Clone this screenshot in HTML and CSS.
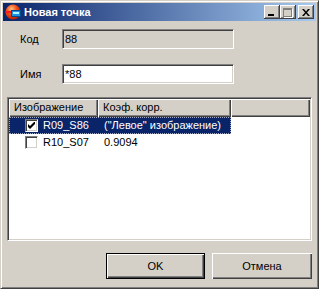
FILE: index.html
```html
<!DOCTYPE html>
<html lang="ru">
<head>
    <meta charset="UTF-8">
    <title>Новая точка</title>
    <link rel="stylesheet" href="styles.css">
</head>
<body>
    <div class="window">
        <div class="titlebar">
            <svg class="app-icon" width="16" height="16" viewBox="0 0 16 16">
                <defs>
                    <radialGradient id="ball" cx="0.4" cy="0.3" r="0.75">
                        <stop offset="0" stop-color="#ffc080"/>
                        <stop offset="0.45" stop-color="#f05018"/>
                        <stop offset="1" stop-color="#b01800"/>
                    </radialGradient>
                </defs>
                <circle cx="8" cy="8" r="7.5" fill="url(#ball)"/>
                <rect x="0.5" y="7" width="8" height="2" fill="#ff1a1a"/>
                <rect x="6.5" y="6.5" width="9" height="6" fill="#1e90e0" stroke="#004a90" stroke-width="1"/>
                <rect x="8" y="8" width="6" height="2" fill="#b0f4ff"/>
            </svg>
            <span class="title">Новая точка</span>
            <div class="controls">
                <div class="ctl ctl-min"><span></span></div>
                <div class="ctl ctl-max disabled"><span></span></div>
                <div class="ctl ctl-close">
                    <svg width="8" height="7" viewBox="0 0 8 7">
                        <path d="M0 0h2l2 2.5 2-2.5h2L5 3.5 8 7H6L4 4.5 2 7H0l3-3.5z" fill="#000"/>
                    </svg>
                </div>
            </div>
        </div>

        <div class="content">
            <div class="form-group first">
                <label for="code">Код</label>
                <input type="text" id="code" class="field disabled" value="88" readonly>
            </div>
            <div class="form-group">
                <label for="name">Имя</label>
                <input type="text" id="name" class="field" value="*88">
            </div>

            <div class="listview">
                <div class="lv-header">
                    <div class="hcell c1">Изображение</div>
                    <div class="hcell c2">Коэф. корр.</div>
                    <div class="hcell c3"></div>
                </div>
                <div class="lv-row selected">
                    <div class="cell c1"><span class="check checked">
                        <svg width="7" height="7" viewBox="0 0 7 7"><path d="M0 2v3l2 2 5-5V-1L2 4z" fill="#000"/></svg>
                    </span>R09_S86</div>
                    <div class="cell c2">("Левое" изображение)</div>
                </div>
                <div class="lv-row">
                    <div class="cell c1"><span class="check"></span>R10_S07</div>
                    <div class="cell c2">0.9094</div>
                </div>
            </div>

            <div class="buttons">
                <button class="btn default">OK</button>
                <button class="btn cancel">Отмена</button>
            </div>
        </div>
    </div>
</body>
</html>
```

FILE: styles.css
```css
body {
    margin: 0;
    font-family: "Liberation Sans", Arial, sans-serif;
    font-size: 11px;
    color: #000;
}
.window {
    width: 319px;
    height: 289px;
    box-sizing: border-box;
    background-color: #d4d0c8;
    border: 1px solid;
    border-color: #d4d0c8 #404040 #404040 #d4d0c8;
    box-shadow: inset 1px 1px #fff, inset -1px -1px #808080;
    padding: 2px;
}
.titlebar {
    height: 18px;
    display: flex;
    align-items: center;
    padding: 0 2px;
    background: linear-gradient(to right, #0a246a, #a6caf0);
}
.app-icon {
    margin-right: 3px;
}
.title {
    color: #fff;
    font-weight: bold;
    font-size: 11px;
}
.controls {
    margin-left: auto;
    display: flex;
}
.ctl {
    width: 16px;
    height: 14px;
    box-sizing: border-box;
    background-color: #d4d0c8;
    box-shadow: inset -1px -1px #404040, inset 1px 1px #fff, inset -2px -2px #808080;
    display: flex;
    align-items: center;
    justify-content: center;
}
.ctl-close {
    margin-left: 2px;
}
.ctl-min span {
    width: 6px;
    height: 2px;
    background: #000;
    margin-top: 6px;
    margin-left: -2px;
}
.ctl-max span {
    width: 9px;
    height: 9px;
    box-sizing: border-box;
    border: 1px solid #808080;
    border-top-width: 2px;
    margin-left: -1px;
    box-shadow: 1px 1px #fff;
}
.ctl-close svg {
    margin-left: -1px;
}
.content {
    padding: 0 4px;
}
.form-group {
    display: flex;
    align-items: center;
    padding-left: 13px;
    margin-top: 15px;
}
.form-group.first {
    margin-top: 8px;
}
label {
    width: 42px;
}
.field {
    width: 172px;
    height: 20px;
    box-sizing: border-box;
    margin: 0;
    padding: 0 2px;
    font-family: "Liberation Sans", Arial, sans-serif;
    font-size: 11px;
    color: #000;
    background-color: #fff;
    border: 1px solid;
    border-color: #808080 #fff #fff #808080;
    box-shadow: inset 1px 1px #404040, inset -1px -1px #d4d0c8;
    outline: none;
}
.field.disabled {
    background-color: #d4d0c8;
}
.listview {
    margin-top: 13px;
    height: 144px;
    box-sizing: border-box;
    background-color: #fff;
    border: 1px solid;
    border-color: #808080 #fff #fff #808080;
    box-shadow: inset 1px 1px #404040, inset -1px -1px #d4d0c8;
    padding: 1px;
}
.lv-header {
    display: flex;
    height: 18px;
}
.hcell {
    box-sizing: border-box;
    height: 18px;
    line-height: 17px;
    padding-left: 5px;
    background-color: #d4d0c8;
    box-shadow: inset 1px 1px #fff, inset -1px -1px #404040, inset -2px -2px #808080;
    white-space: nowrap;
    overflow: hidden;
}
.c1 {
    width: 89px;
}
.c2 {
    width: 133px;
}
.c3 {
    flex: 1;
}
.lv-row {
    display: flex;
    height: 17px;
    width: 222px;
    line-height: 17px;
    box-sizing: border-box;
}
.lv-row.selected {
    background-color: #0a246a;
    color: #fff;
    outline: 1px dotted #a0a8c8;
    outline-offset: -1px;
}
.cell {
    box-sizing: border-box;
    display: flex;
    align-items: center;
    white-space: nowrap;
}
.cell.c1 {
    padding-left: 16px;
}
.cell.c2 {
    padding-left: 6px;
}
.check {
    width: 13px;
    height: 13px;
    box-sizing: border-box;
    background-color: #fff;
    border: 1px solid;
    border-color: #808080 #fff #fff #808080;
    box-shadow: inset 1px 1px #404040, inset -1px -1px #d4d0c8;
    margin-right: 5px;
    display: flex;
    align-items: center;
    justify-content: center;
}
.buttons {
    display: flex;
    justify-content: flex-end;
    gap: 7px;
    margin-top: 12px;
}
.btn {
    height: 26px;
    box-sizing: border-box;
    margin: 0;
    padding: 0;
    font-family: "Liberation Sans", Arial, sans-serif;
    font-size: 11px;
    color: #000;
    background-color: #d4d0c8;
    border: none;
    box-shadow: inset 1px 1px #fff, inset -1px -1px #404040, inset -2px -2px #808080;
}
.btn.default {
    width: 99px;
    border: 1px solid #000;
}
.btn.cancel {
    width: 100px;
}
```
